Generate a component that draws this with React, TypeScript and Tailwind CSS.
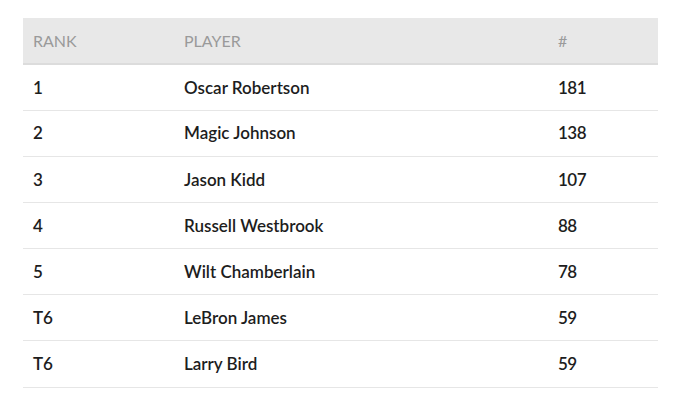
const rows = [
  { rank: "1", player: "Oscar Robertson", count: "181" },
  { rank: "2", player: "Magic Johnson", count: "138" },
  { rank: "3", player: "Jason Kidd", count: "107" },
  { rank: "4", player: "Russell Westbrook", count: "88" },
  { rank: "5", player: "Wilt Chamberlain", count: "78" },
  { rank: "T6", player: "LeBron James", count: "59" },
  { rank: "T6", player: "Larry Bird", count: "59" },
];

export default function App() {
  return (
    <div className="min-h-[402px] w-[697px] bg-white pt-[18px] pl-[23px] font-['Lato',sans-serif]">
      <table className="w-[635px] border-collapse text-left">
        <thead>
          <tr className="h-[46px] border-b-2 border-[#dcdcdc] bg-[#e8e8e8]">
            <th className="w-[151px] pl-[10px] text-[16px] font-normal text-[#9a9a9a]">RANK</th>
            <th className="w-[374px] pl-[10px] text-[16px] font-normal text-[#9a9a9a]">PLAYER</th>
            <th className="pl-[10px] text-[16px] font-normal text-[#9a9a9a]">#</th>
          </tr>
        </thead>
        <tbody>
          {rows.map((r, i) => (
            <tr key={i} className="h-[46.17px] border-b border-[#e6e6e6] text-[17px] font-semibold text-[#1d1d1d]">
              <td className="pl-[10px]">{r.rank}</td>
              <td className="pl-[10px]">{r.player}</td>
              <td className="pl-[10px] tracking-[-0.5px]">{r.count}</td>
            </tr>
          ))}
        </tbody>
      </table>
    </div>
  );
}
